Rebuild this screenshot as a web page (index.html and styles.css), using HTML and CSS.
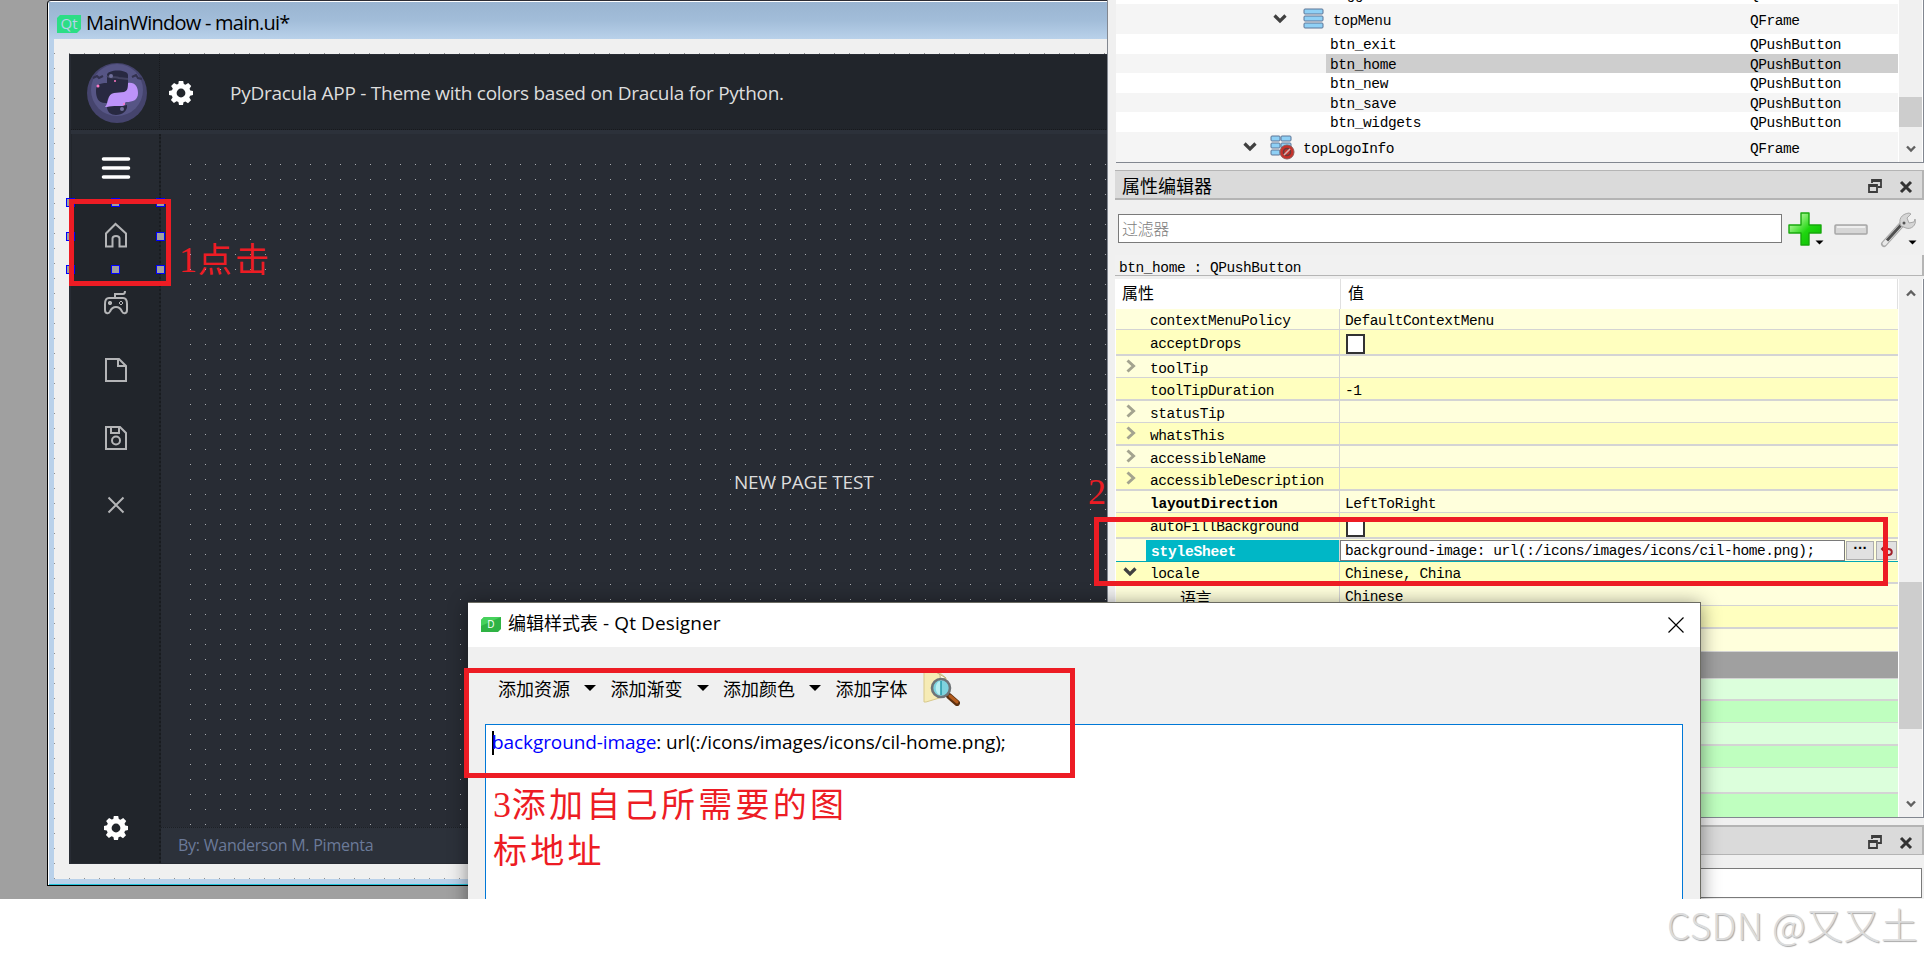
FILE: index.html
```html
<!DOCTYPE html>
<html lang="zh-CN">
<head>
  <meta charset="UTF-8">
  <title>Qt Designer</title>
  <link rel="stylesheet" href="styles.css">
</head>
<body>
  <svg class="defs" width="0" height="0">
    <symbol id="gear" viewBox="0 0 24 24">
      <path fill-rule="evenodd" d="M9.800 0h4.400l.6 3 1.700.8 2.700-1.700 3 3-1.700 2.600.8 1.900 2.700.5v4l-2.900.6-.8 1.900 1.700 2.600-3 3-2.600-1.700-1.900.8-.5 2.700h-4l-.6-2.900-1.900-.8-2.600 1.700-3-3 1.700-2.600-.8-1.900L0 13.900v-4l3-.6.8-1.900-1.700-2.500 3-3 2.600 1.700 1.600-.7zM12 7.600a4.400 4.400 0 1 0 0 8.800 4.400 4.400 0 0 0 0-8.800z"/>
    </symbol>
    <symbol id="chev" viewBox="0 0 14 10">
      <path d="M1.500 1.500L7 7l5.500-5.500" fill="none" stroke="#404040" stroke-width="3.200"/>
    </symbol>
    <symbol id="right" viewBox="0 0 10 14">
      <path d="M1.500 1.500L7.500 7l-6 5.500" fill="none" stroke="#a3a38f" stroke-width="3"/>
    </symbol>
    <symbol id="scroll" viewBox="0 0 10 8">
      <path d="M1 1.500L5 5.500l4-4" fill="none" stroke="#606060" stroke-width="2.400"/>
    </symbol>
    <symbol id="float" viewBox="0 0 14 14">
      <path d="M4 4V1h9v7h-3M1 6h8v7H1zM4 2h9M1 7h8" fill="none" stroke="#3c3c3c" stroke-width="1.800"/>
    </symbol>
    <symbol id="cross" viewBox="0 0 14 14">
      <path d="M2 2l10 10M12 2L2 12" fill="none" stroke="#333" stroke-width="3"/>
    </symbol>
  </svg>

  <div class="screen">
    <div class="workspace">
      <div class="window">
        <div class="window-title">
          <svg width="24" height="18" viewBox="0 0 24 18"><path d="M3 0h21v14l-4 4H0V3z" fill="#2cde85"/><text x="12" y="14" text-anchor="middle" class="qt">Qt</text></svg>
          <span>MainWindow - main.ui*</span>
        </div>
        <div class="canvas">
          <div class="form">
            <div class="form-top">
              <div class="logo">
                <svg width="60" height="60" viewBox="0 0 60 60">
                  <circle cx="30" cy="30" r="30" fill="#45446d"/>
                  <circle cx="30" cy="27" r="26" fill="#565585"/>
                  <path d="M6 15l4-2 2 2 4-2M45 14l4-2 2 3 4 1" stroke="#33324f" stroke-width="2" fill="none"/>
                  <path d="M20 12c0-6 21-6 21 0v14c0 4-4 5-9 5-9 0-11 2-12 9-9 1-11-6-11-12 0-6 3-8 11-8z" fill="#282941"/>
                  <path d="M20 13c4 3 8 0 12 2l9 1" stroke="#42425f" stroke-width="2" fill="none"/>
                  <path d="M41 20c7-1 10 4 10 10 0 7-5 9-12 9-1 0-1 2-2 5H18c4-4 2-13 9-14l10-1c3-1 4-3 4-9z" fill="#bd93f9"/>
                  <path d="M20 44c6-2 14 0 20-2 1 6-5 10-11 10-5 0-9-3-9-8z" fill="#282941"/>
                  <circle cx="35" cy="46" r="2" fill="#70709a"/><circle cx="24" cy="13" r="2" fill="#70709a"/>
                  <circle cx="11" cy="23" r="1.500" fill="#ff79c6"/><circle cx="28" cy="18" r="1" fill="#ff79c6"/><circle cx="37" cy="41" r="1" fill="#ff79c6"/>
                </svg>
              </div>
              <svg class="top-gear" width="24" height="24"><use href="#gear"/></svg>
              <span class="form-title">PyDracula APP - Theme with colors based on Dracula for Python.</span>
            </div>
            <div class="form-main">
              <div class="menu">
                <div class="menu-item toggle"><svg width="30" height="24" viewBox="0 0 30 24"><path d="M2.500 3h25M2.500 12h25M2.500 21h25" stroke="#fff" stroke-width="3.600" stroke-linecap="round"/></svg></div>
                <div class="menu-item"><svg width="24" height="26" viewBox="0 0 24 26"><path d="M2 24.500V11.500L11.500 2 22 11.500v13h-6.500v-8c0-1.500-1-2.500-3.500-2.500s-3.500 1-3.500 2.500v8z"/></svg></div>
                <div class="menu-item"><svg width="24" height="26" viewBox="0 0 24 26"><path d="M11 8V4h8c1.500 0 2-1 2-3M5 8h14c3 0 4 3 4 6v6c0 4-4 4-5 1.500C16.500 18 15 17 12 17s-4.500 1-6 4.500C5 24 1 24 1 20v-6c0-3 1-6 4-6z"/><path d="M4 13h4M6 11v4" stroke-width="2.400"/><path d="M17 11l2 2-2 2-2-2z" stroke-width="1"/></svg></div>
                <div class="menu-item"><svg width="24" height="26" viewBox="0 0 24 26"><path d="M2 2h13l7 7v15H2zM14 2v7h8"/></svg></div>
                <div class="menu-item"><svg width="24" height="26" viewBox="0 0 24 26"><path d="M2 2h14l6 6v16H2zM7 2v6h8V2"/><circle cx="12" cy="15.500" r="4"/></svg></div>
                <div class="menu-item"><svg width="24" height="26" viewBox="0 0 24 26"><path d="M4.500 5.500l15 15M19.500 5.500l-15 15"/></svg></div>
                <svg class="menu-gear" width="24" height="24"><use href="#gear"/></svg>
              </div>
              <div class="content">
                <div class="page"><span>NEW PAGE TEST</span></div>
                <div class="credits">By: Wanderson M. Pimenta</div>
              </div>
            </div>
          </div>
        </div>
      </div>
    </div>

    <div class="docks">
      <div class="tree">
        <div class="tree-rows">
          <div class="node cut"><span class="name">toggleButton</span><span class="type">QPushButton</span></div>
          <div class="node tall alt lvl1"><svg width="14" height="10"><use href="#chev"/></svg>
            <svg class="kind" width="22" height="22" viewBox="0 0 22 22"><rect x="1" y="1" width="19" height="5" rx="1"/><rect x="1" y="8" width="19" height="5" rx="1"/><rect x="1" y="15" width="19" height="5" rx="1"/></svg>
            <span class="name">topMenu</span><span class="type">QFrame</span></div>
          <div class="node h20"><span class="name">btn_exit</span><span class="type">QPushButton</span></div>
          <div class="node h19 alt selected"><span class="name">btn_home</span><span class="type">QPushButton</span></div>
          <div class="node h20"><span class="name">btn_new</span><span class="type">QPushButton</span></div>
          <div class="node h19 alt"><span class="name">btn_save</span><span class="type">QPushButton</span></div>
          <div class="node h20"><span class="name">btn_widgets</span><span class="type">QPushButton</span></div>
          <div class="node tall alt lvl0"><svg width="14" height="10"><use href="#chev"/></svg>
            <svg class="kind" width="25" height="25" viewBox="0 0 25 25"><rect x="1" y="1" width="9" height="5" rx="1"/><rect x="11" y="1" width="10" height="5" rx="1"/><rect x="1" y="8" width="9" height="5" rx="1"/><rect x="11" y="8" width="10" height="5" rx="1"/><rect x="1" y="15" width="9" height="5" rx="1"/><circle cx="17" cy="17" r="7" fill="#c8322b" stroke="#8d5a57"/><circle cx="17" cy="17" r="3.500" fill="none" stroke="#6b3a3a" stroke-width="1.600"/><path d="M14 20l6-6" stroke="#d9b0ae" stroke-width="1.600"/></svg>
            <span class="name">topLogoInfo</span><span class="type">QFrame</span></div>
        </div>
        <div class="bar tree-bar"><i class="thumb"></i><svg width="10" height="8"><use href="#scroll"/></svg></div>
      </div>

      <div class="dock-title">属性编辑器<svg width="14" height="14"><use href="#float"/></svg><svg width="14" height="14"><use href="#cross"/></svg></div>
      <div class="filter-row">
        <div class="filter">过滤器</div>
        <svg class="plus" width="36" height="36" viewBox="0 0 36 36">
          <defs><linearGradient id="pg" x1="0" y1="0" x2="1" y2="1"><stop offset=".2" stop-color="#a5f58f"/><stop offset=".55" stop-color="#1fd60f"/><stop offset="1" stop-color="#08b800"/></linearGradient></defs>
          <path d="M13 2h8v12h12v8H21v12h-8V22H1v-8h12z" fill="url(#pg)" stroke="#17a80c" stroke-width="1.400" stroke-linejoin="round"/>
          <path d="M27.500 29.500h8l-4 4z" fill="#000"/></svg>
        <svg class="minus" width="34" height="12" viewBox="0 0 34 12"><rect x="1" y="1" width="32" height="9" rx="1" fill="#d6d6d6" stroke="#a6a6a6" stroke-width="1.500"/><path d="M3 3h28" stroke="#eee" stroke-width="2"/></svg>
        <svg class="wrench" width="37" height="38" viewBox="0 0 37 38">
          <path d="M4 34L23 13" stroke="#a9a9a9" stroke-width="6" stroke-linecap="round"/>
          <path d="M4.500 33.500L22 14" stroke="#e8e8e8" stroke-width="4" stroke-linecap="round"/>
          <path d="M7 30.500L21 15" stroke="#505050" stroke-width="3"/>
          <path d="M21 16c-3-6 0-12 8-13l2 1-4 4 2 5 5-1 1-3c2 6-4 11-9 9z" fill="#d5d5d5" stroke="#a8a8a8"/>
          <circle cx="24" cy="13" r="1.500" fill="#555"/>
          <path d="M28.500 30.500h8l-4 4z" fill="#000"/></svg>
      </div>
      <div class="object">btn_home : QPushButton</div>

      <div class="props">
        <div class="prop-list">
          <div class="prop-head"><span>属性</span><span>值</span></div>
          <div class="prop h21"><span class="key">contextMenuPolicy</span><span class="val">DefaultContextMenu</span></div>
          <div class="prop even h26"><span class="key">acceptDrops</span><span class="val"><i class="check"></i></span></div>
          <div class="prop"><span class="key"><svg width="10" height="14"><use href="#right"/></svg>toolTip</span><span class="val"></span></div>
          <div class="prop even"><span class="key">toolTipDuration</span><span class="val">-1</span></div>
          <div class="prop"><span class="key"><svg width="10" height="14"><use href="#right"/></svg>statusTip</span><span class="val"></span></div>
          <div class="prop even"><span class="key"><svg width="10" height="14"><use href="#right"/></svg>whatsThis</span><span class="val"></span></div>
          <div class="prop"><span class="key"><svg width="10" height="14"><use href="#right"/></svg>accessibleName</span><span class="val"></span></div>
          <div class="prop even"><span class="key"><svg width="10" height="14"><use href="#right"/></svg>accessibleDescription</span><span class="val"></span></div>
          <div class="prop"><span class="key bold">layoutDirection</span><span class="val">LeftToRight</span></div>
          <div class="prop even h26"><span class="key">autoFillBackground</span><span class="val"><i class="check"></i></span></div>
          <div class="prop current"><span class="key bold">styleSheet</span><span class="edit">background-image: url(:/icons/images/icons/cil-home.png);</span><span class="btn dots">...</span><span class="btn"><svg width="14" height="14" viewBox="0 0 14 14"><path d="M2 5h6c5 0 5 6 0 6H6M5 2L2 5l3 3" fill="none" stroke="#a02028" stroke-width="2"/></svg></span></div>
          <div class="prop even h22"><span class="key"><svg class="open" width="14" height="10"><use href="#chev"/></svg>locale</span><span class="val">Chinese, China</span></div>
          <div class="prop"><span class="key sub">语言</span><span class="val">Chinese</span></div>
          <div class="prop even"><span class="key"></span><span class="val"></span></div>
          <div class="prop h23"><span class="key"></span><span class="val"></span></div>
          <div class="prop group"></div>
          <div class="prop green two h22"></div>
          <div class="prop green-even one"></div>
          <div class="prop green two"></div>
          <div class="prop green-even one"></div>
          <div class="prop green two h26"></div>
          <div class="prop green-even last"></div>
        </div>
        <div class="bar prop-bar"><svg class="up" width="10" height="8"><use href="#scroll"/></svg><i class="thumb"></i><svg width="10" height="8"><use href="#scroll"/></svg></div>
      </div>

      <div class="dock-title second"><svg width="14" height="14"><use href="#float"/></svg><svg width="14" height="14"><use href="#cross"/></svg></div>
      <div class="filter second-filter"></div>
    </div>

    <div class="dialog-clip">
      <div class="dialog">
        <div class="dialog-title">
          <svg width="20" height="15" viewBox="0 0 20 15"><path d="M3 0h17v12l-3 3H0V3z" fill="#2fb344"/><path d="M3 0h17L0 9V3z" fill="#46d15c"/><text x="10" y="11" text-anchor="middle" class="d">D</text></svg>
          <span>编辑样式表<em> - Qt Designer</em></span>
          <svg class="close" width="16" height="16" viewBox="0 0 16 16"><path d="M.5 .5l15 15M15.500 .5l-15 15" stroke="#000" stroke-width="1.200"/></svg>
        </div>
        <div class="tools">
          <span>添加资源</span><i></i>
          <span>添加渐变</span><i></i>
          <span>添加颜色</span><i></i>
          <span>添加字体</span>
          <svg width="37" height="36" viewBox="0 0 37 36">
            <path d="M1 2h15l7 6v18L3 32H1z" fill="#f6ebb5" stroke="#d8c98c"/>
            <path d="M11 1c4 0 7 3 6 8l6-1z" fill="#fffbe8" stroke="#bcae80"/>
            <path d="M26 26l8 7" stroke="#5b3010" stroke-width="6" stroke-linecap="round"/>
            <path d="M27 26l7 6" stroke="#b35c1e" stroke-width="3" stroke-linecap="round"/>
            <circle cx="18" cy="18" r="9" fill="#7fd3de" stroke="#6f7477" stroke-width="2.600"/>
            <path d="M18 11v14c-7 0-7-14 0-14z" fill="#b8eef2"/><path d="M18 11v14" stroke="#2599a8" stroke-width="1.500"/></svg>
        </div>
        <div class="editor"><span class="caret"></span><span class="attr">background-image</span><span class="rest">: url(:/icons/images/icons/cil-home.png);</span></div>
      </div>
    </div>

    <!-- selection handles of btn_home -->
    <div class="handles"><i></i><i></i><i></i><i></i><i class="none"></i><i></i><i></i><i></i><i></i></div>

    <div class="mark mark1"></div>
    <div class="mark mark2"></div>
    <div class="mark mark3"></div>
    <div class="note note1"><b>1</b>点击</div>
    <div class="note note2"><b>2</b></div>
    <div class="note note3"><b>3</b>添加自己所需要的图<br>标地址</div>
    <div class="watermark">CSDN @又又土</div>
  </div>
</body>
</html>
```
FILE: styles.css
```css
* {
  box-sizing: border-box;
}
body {
  margin: 0;
  background: #fff;
  font-family: "Open Sans", "Noto Sans CJK SC", sans-serif;
  font-size: 18px;
  color: #000;
}
svg {
  display: block;
  flex: none;
}
.defs {
  position: absolute;
}
.screen {
  position: relative;
  width: 1924px;
  height: 960px;
  overflow: hidden;
  display: flex;
  align-items: flex-start;
}

/* workspace with the form window */
.workspace {
  width: 1107px;
  height: 899px;
  padding: 0 0 13px 47px;
  background: #a0a0a0;
  overflow: hidden;
}
.window {
  width: 1100px;
  height: 886px;
  border: 1px solid #000;
  border-top-color: #2c2c34;
  border-top-left-radius: 4px;
  background: #b9d1ea;
  box-shadow: inset 1px 1px 0 #fff, inset 0 -1px 0 #22c4dc;
  padding: 1px 6px;
}
.window-title {
  height: 37px;
  margin: 0 -5px;
  padding-left: 8px;
  display: flex;
  align-items: center;
  gap: 5px;
  background: linear-gradient(#99b4d1, #a2bdd9 50%, #b9d1ea);
  font-size: 20px;
}
.window-title svg {
  margin-top: 7px;
  overflow: visible;
}
.window-title span {
  margin-top: 3px;
  letter-spacing: -0.75px;
}
.qt {
  font: 15px "Open Sans", sans-serif;
  fill: #b9d1ea;
}
.canvas {
  height: 840px;
  padding: 15px 0 15px 15px;
  background-color: #f0f0f0;
  background-image: radial-gradient(circle at 0.5px 0.5px, #909090 0.8px, transparent 0.9px);
  background-size: 15px 15px;
  background-position: 0 14px;
}
.form {
  height: 810px;
  padding: 1px 0 1px 2px;
  background: #282c34;
  display: flex;
  flex-direction: column;
}
.form-top {
  height: 75px;
  background: #21252b;
  border-bottom: 1px dotted #17191d;
  display: flex;
  align-items: center;
}
.logo {
  width: 89px;
  height: 75px;
  padding: 8px 0 0 16px;
  border-right: 1px dotted #17191d;
}
.top-gear {
  margin-left: 9px;
  fill: #fff;
  margin-top: 1px;
}
.form-title {
  margin: 1px 0 0 37px;
  color: #dddddd;
  font-size: 19px;
  letter-spacing: -0.26px;
}
.form-main {
  flex: 1;
  min-height: 0;
  display: flex;
  border-top: 4px solid #2c313a;
}
.menu {
  width: 90px;
  padding-bottom: 23px;
  padding-left: 1px;
  border-right: 2px dotted #191c20;
  background: #21252b;
  display: flex;
  flex-direction: column;
  align-items: center;
}
.menu-item {
  width: 100%;
  height: 67.5px;
  display: flex;
  align-items: center;
  justify-content: center;
}
.menu-item svg {
  fill: none;
  stroke: #b4b5b7;
  stroke-width: 2;
}
.menu-item.toggle {
  background: #262a31;
}
.menu-gear {
  margin-top: auto;
  fill: #fff;
}
.content {
  flex: 1;
  display: flex;
  flex-direction: column;
}
.page {
  flex: 1;
  margin: 30px 0 0 29px;
  background-image: radial-gradient(circle at 0.5px 0.5px, #a8abaf 0.6px, transparent 0.7px);
  background-size: 15px 15px;
  color: #dddddd;
  font-size: 19px;
}
.page span {
  display: block;
  padding: 305px 0 0 544px;
  letter-spacing: -0.2px;
}
.credits {
  height: 36px;
  padding-left: 17px;
  background: #2c313a;
  border-top: 1px dotted #1d2025;
  color: #6b7a99;
  font-size: 16px;
  letter-spacing: -0.25px;
  line-height: 35px;
}

/* right docks */
.docks {
  width: 817px;
  height: 899px;
  border-left: 1px solid #828790;
  padding-left: 7px;
  background: #f0f0f0;
  font: 14.5px/19px "Liberation Mono", "Noto Sans CJK SC", monospace;
  letter-spacing: -0.43px;
  display: flex;
  flex-direction: column;
}
.tree {
  height: 163px;
  margin-left: 1px;
  background: #fff;
  border-bottom: 1px solid #828790;
  border-right: 1px solid #828790;
  display: flex;
}
.tree-rows {
  width: 782px;
}
.node {
  display: flex;
  align-items: center;
  padding-left: 214px;
}
.node.tall { height: 30px; }
.node.h20 { height: 20px; }
.node.h19 { height: 19px; }
.node.alt { background: #f5f5f5; }
.node.selected { background: linear-gradient(90deg, #f5f5f5 210px, #cecece 210px); }
.node .name {
  padding-top: 3px;
}
.node .type {
  width: 148px;
  margin-left: auto;
  padding-top: 3px;
}
.node.tall .name,
.node.tall .type {
  padding-top: 5px;
}
.node.cut {
  height: 4px;
  overflow: hidden;
  align-items: flex-end;
}
.node.cut .name,
.node.cut .type {
  line-height: 17px;
}
.node.lvl1 { padding-left: 157px; }
.node.lvl0 { padding-left: 127px; }
.kind {
  margin: 0 9px 0 16px;
  fill: #8fd0f5;
  stroke: #5c7496;
}
.lvl1 .kind {
  margin-right: 8px;
}
.lvl0 .kind {
  margin: 0 8px 0 13px;
}
.bar {
  width: 23px;
  margin-left: 1px;
  background: #f0f0f0;
  display: flex;
  flex-direction: column;
  align-items: center;
}
.bar .thumb {
  width: 100%;
  background: #cdcdcd;
}
.bar svg {
  margin-top: auto;
  margin-bottom: 9px;
}
.tree-bar .thumb {
  height: 30px;
  margin-top: 97px;
}
.dock-title {
  height: 30px;
  margin-top: 7px;
  padding: 0 9px 0 7px;
  display: flex;
  align-items: center;
  background: #dadada;
  border: solid #b4b4b4;
  border-width: 1px 2px 2px 0;
  font: 18px "Noto Sans CJK SC", sans-serif;
  letter-spacing: 0;
}
.dock-title svg {
  margin-top: 4px;
}
.dock-title svg:first-of-type {
  margin: 3px 17px 0 auto;
}
.filter-row {
  height: 55px;
  padding: 10px 7px 0 3px;
  display: flex;
  align-items: flex-start;
}
.filter {
  width: 665px;
  height: 29px;
  margin-top: 4px;
  padding-left: 3px;
  border: 1px solid #7a7a7a;
  background: #fff;
  color: #808080;
  font: 16px/26px "Noto Sans CJK SC", sans-serif;
  font-weight: 300;
}
.plus { margin-left: 6px; margin-top: 1px; }
.minus { margin: 14px 0 0 10px; }
.wrench { margin: 0 0 0 12px; }
.object {
  height: 21px;
  padding-left: 4px;
  background: #f1f1f1;
  border-bottom: 1px solid #b5b5b5;
  border-right: 2px solid #b5b5b5;
  line-height: 26px;
}
.props {
  height: 539px;
  margin-top: 3px;
  border-bottom: 1px solid #828790;
  border-right: 1px solid #828790;
  background: #fff;
  display: flex;
}
.prop-list {
  width: 783px;
  padding-left: 1px;
}
.prop-head {
  height: 30px;
  margin-left: -1px;
  display: flex;
  border-right: 1px solid #e0e0e0;
  font: 16px/27px "Noto Sans CJK SC", sans-serif;
  letter-spacing: 0;
}
.prop-head span {
  padding-left: 7px;
}
.prop-head span:first-child {
  width: 226px;
  border-right: 1px solid #e0e0e0;
}
.prop {
  height: 22px;
  display: flex;
  background: #ffffdc;
  border-bottom: 1px solid #d4d4d4;
}
.prop.even {
  height: 23px;
  background: #ffffbf;
  border-bottom-width: 2px;
}
.prop.h21 { height: 21px; }
.prop.even.h22 { height: 22px; }
.prop.h23 { height: 23px; }
.prop.even.h26 { height: 26px; }
.key {
  width: 224px;
  padding: 5px 0 0 34px;
  border-right: 1px solid #d4d4d4;
  display: flex;
  align-items: center;
}
.key svg {
  margin: -7px 14px 0 -24px;
}
.key svg.open {
  margin: -5px 13px 0 -27px;
}
.key.bold {
  font-weight: bold;
  letter-spacing: -0.2px;
}
.key.sub {
  padding-left: 64px;
  font: 16px "Noto Sans CJK SC", sans-serif;
}
.val {
  padding: 5px 0 0 5px;
  display: flex;
  align-items: center;
}
.check {
  width: 19px;
  height: 20px;
  margin: -2px 0 0 1px;
  border: 2px solid #333;
  background: #fff;
}
.prop.current {
  height: 23px;
  border-bottom-color: #00a8b5;
}
.current .key {
  width: 194px;
  margin: 1px 0 0 30px;
  padding: 3px 0 0 5px;
  background: #00b7c6;
  color: #fff;
}
.current .edit {
  width: 505px;
  margin: 1px 1px 0 0;
  padding: 1px 0 0 4px;
  border: 1px solid #7a7a7a;
  background: #fff;
  letter-spacing: -0.46px;
}
.btn {
  width: 21px;
  height: 19px;
  margin-top: 2px;
  border: 1px solid #adadad;
  background: #e1e1e1;
  display: flex;
  align-items: center;
  justify-content: center;
}
.btn.dots {
  width: 28px;
  margin-right: 2px;
  padding: 0 4px 11px 0;
  font-weight: bold;
  letter-spacing: -4px;
}
.prop.group {
  height: 27px;
  background: #a0a0a0;
}
.prop.green { background: #dcffdc; }
.prop.green-even { background: #bfffbf; }
.prop.two { height: 23px; border-bottom-width: 2px; }
.prop.two.h22 { height: 22px; }
.prop.two.h26 { height: 26px; }
.prop.last { height: 23px; border: none; }
.bar .up {
  margin: 10px 0 0;
  transform: rotate(180deg);
}
.prop-bar .thumb {
  height: 147px;
  margin-top: 285px;
}
.dock-title.second {
  border-width: 2px 2px 1px 0;
}
.second-filter {
  width: 804px;
  height: 30px;
  margin: 13px 0 0 3px;
}

/* style sheet dialog, runs past the bottom edge */
.dialog-clip {
  position: absolute;
  left: 438px;
  top: 572px;
  width: 1300px;
  height: 327px;
  overflow: hidden;
  padding: 30px;
}
.dialog {
  width: 1233px;
  height: 400px;
  border: 1px solid #6b6b62;
  border-left: none;
  background: #f0f0f0;
  box-shadow: 0 2px 18px rgba(0, 0, 0, 0.45);
}
.dialog-title {
  height: 44px;
  padding: 0 16px 0 13px;
  display: flex;
  align-items: center;
  background: #fff;
  font-family: "Noto Sans CJK SC", sans-serif;
  font-size: 18px;
}
.dialog-title svg {
  margin-top: -1px;
  overflow: visible;
}
.dialog-title span {
  margin: -5px 0 0 7px;
}
.dialog-title em {
  font-family: "Open Sans", sans-serif;
  font-size: 19px;
  font-style: normal;
  letter-spacing: 0.1px;
}
.d {
  font: 10px "Open Sans", sans-serif;
  fill: #fff;
}
.dialog-title .close {
  margin-left: auto;
}
.tools {
  height: 77px;
  padding: 5px 0 0 30px;
  display: flex;
  align-items: center;
  font: 18px "Noto Sans CJK SC", sans-serif;
}
.tools i {
  width: 12px;
  margin: 0 14.5px 0 14px;
  border: 6px solid transparent;
  border-top-color: #000;
  border-bottom: none;
}
.tools svg {
  margin-left: 15px;
}
.editor {
  width: 1198px;
  height: 300px;
  margin-left: 17px;
  padding: 5px 0 0 6px;
  border: 1px solid #0078d7;
  background: #fff;
  display: flex;
  line-height: 25px;
  font-size: 19px;
  letter-spacing: -0.09px;
}
.caret {
  width: 2px;
  height: 24px;
  margin: 1px -2px 0 0;
  background: #000;
}
.attr {
  color: #0000ff;
}

.handles {
  position: absolute;
  left: 66px;
  top: 198px;
  display: grid;
  grid-template-columns: repeat(3, 9px);
  gap: 24.5px 36px;
}
.handles i {
  height: 9px;
  border: 1px solid #0000ff;
  background: #a0a0a0;
}
.handles .none {
  visibility: hidden;
}

/* red annotations */
.mark {
  position: absolute;
  border: 5px solid #ed1c24;
}
.mark1 { left: 69px; top: 199px; width: 102px; height: 87px; }
.mark2 { left: 1094px; top: 517px; width: 794px; height: 69px; }
.mark3 { left: 464px; top: 668px; width: 611px; height: 110px; }
.note {
  position: absolute;
  color: #ed1c24;
  font: 400 34px/46px "Noto Sans CJK SC", sans-serif;
  letter-spacing: 3.3px;
  white-space: nowrap;
}
.note b {
  font: 36px/1px "Liberation Serif", serif;
  letter-spacing: 0.7px;
}
.note1 { left: 179px; top: 235px; }
.note2 { left: 1088px; top: 467px; }
.note3 { left: 493px; top: 780px; }
.watermark {
  position: absolute;
  left: 1667px;
  top: 898px;
  color: #dcdcdc;
  font: 300 37px/52px "Noto Sans CJK SC", sans-serif;
  letter-spacing: 0.4px;
  text-shadow: 1px 1px 1px #a8a8a8;
  white-space: nowrap;
}
```
